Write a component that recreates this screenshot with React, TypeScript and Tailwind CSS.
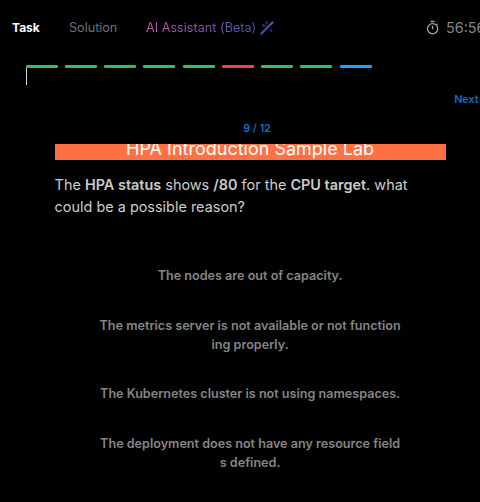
import React from "react";

const bars = [
  "bg-[#26c35f]",
  "bg-[#26c35f]",
  "bg-[#26c35f]",
  "bg-[#26c35f]",
  "bg-[#26c35f]",
  "bg-[#f04444]",
  "bg-[#26c35f]",
  "bg-[#26c35f]",
  "bg-[#1ba7ff]",
];

const options = [
  { lines: ["The nodes are out of capacity."], tall: false },
  { lines: ["The metrics server is not available or not function", "ing properly."], tall: true },
  { lines: ["The Kubernetes cluster is not using namespaces."], tall: false },
  { lines: ["The deployment does not have any resource field", "s defined."], tall: true },
];

function WandIcon() {
  return (
    <svg className="ml-[3px] h-4 w-4 shrink-0" viewBox="0 0 16 16" fill="none" stroke="#4644a0" strokeLinecap="round">
      <path d="M2.3 13.6 13.6 2.4" strokeWidth="2.3" />
      <path d="M11.3 4.7 13.5 2.5" stroke="#5e60c8" strokeWidth="1" />
      <path d="M3 5.2h2.4M4.2 4v2.4M7 2.6h2M8 1.6v2M11 10.5h2.4M12.2 9.3v2.4M6.2 6.2l.8-.8" stroke="#302f70" strokeWidth="1.2" />
    </svg>
  );
}

function TimerIcon() {
  return (
    <svg className="h-[16px] w-[14px] shrink-0" viewBox="0 0 14 16" fill="none" stroke="#a3a3a3" strokeWidth="1.3">
      <circle cx="6.6" cy="8.7" r="5.1" />
      <path d="M4.7 1.5h3.8M6.6 5.8v3.4M10.4 4.7l1.1-1" />
    </svg>
  );
}

export default function App() {
  return (
    <div className="h-[502px] w-[480px] overflow-hidden bg-black font-['Inter',sans-serif]">
      <header className="flex h-14 items-center pl-3 text-[12.6px] whitespace-nowrap">
        <span className="w-[57px] text-[12px] font-bold text-white">Task</span>
        <span className="w-[77px] text-[#6b7280]">Solution</span>
        <span className="bg-linear-to-r from-[#b95aa5] to-[#514eaf] bg-clip-text tracking-[0.03px] text-transparent">AI Assistant (Beta)</span>
        <WandIcon />
        <div className="ml-auto flex w-[54px] shrink-0 items-center gap-[6px] overflow-hidden text-[14.4px] text-[#858585]">
          <TimerIcon />
          <span>56:56</span>
        </div>
      </header>

      <div className="ml-[25.8px] flex gap-[7.22px] pt-[9px]">
        {bars.map((color, i) => (
          <span key={i} className={`h-[3px] w-8 rounded-[1px] ${color}`} />
        ))}
      </div>
      <div className="ml-[26px] h-[17px] w-px bg-[#d4d4d4]" />

      <div className="mt-[6px] flex h-[18px] items-center justify-end overflow-hidden pr-[1.4px] text-[10.8px] font-semibold text-[#0870bf]">
        Next
      </div>

      <main className="ml-[54.6px] w-[391px]">
        <div className="mt-[11px] ml-[14px] h-[18px] text-center text-[10.8px] leading-[18px] font-semibold text-[#0870bf]">
          9 / 12
        </div>
        <div className="mt-[6px] flex h-4 items-end justify-center overflow-hidden bg-[#ff7043]">
          <h1 className="text-[18px] leading-[22px] whitespace-nowrap text-white">HPA Introduction Sample Lab</h1>
        </div>
        <p className="mt-[14px] text-[14.4px] leading-[22px] tracking-[0.02px] whitespace-nowrap text-[#cbcbcb]">
          The <b className="font-semibold">HPA status</b> shows <b className="font-semibold">/80</b> for the{" "}
          <b className="font-semibold">CPU target</b>. what
          <br />
          could be a possible reason?
        </p>
        <div className="mt-[38px] flex flex-col gap-[11px]">
          {options.map((option) => (
            <button
              key={option.lines[0]}
              className={`flex w-full flex-col items-center justify-center bg-[#010101] text-[12.6px] leading-[19px] font-semibold whitespace-nowrap text-[#858585] ${
                option.tall ? "h-[58px] rounded-[29px] pt-[2px]" : "h-[38px] rounded-[19px]"
              }`}
            >
              {option.lines.map((line) => (
                <span key={line}>{line}</span>
              ))}
            </button>
          ))}
        </div>
      </main>
    </div>
  );
}
